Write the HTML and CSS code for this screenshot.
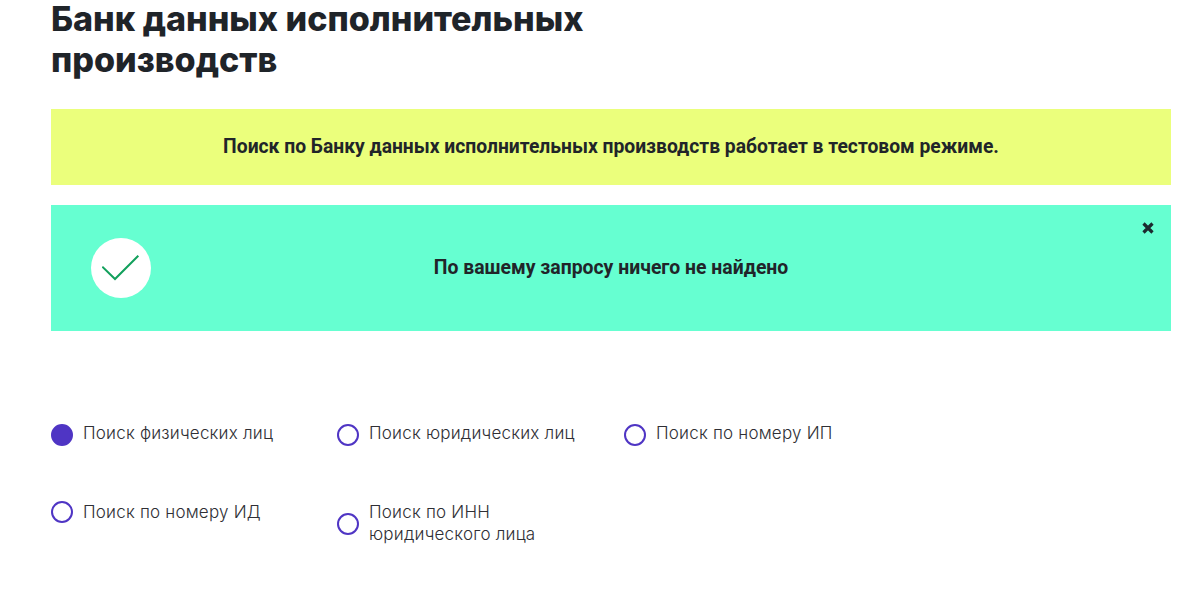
FILE: index.html
```html
<!DOCTYPE html>
<html lang="ru">
<head>
    <meta charset="UTF-8">
    <title>Банк данных исполнительных производств</title>
    <link rel="stylesheet" href="styles.css">
</head>
<body>
    <div class="page">
        <h1 class="page-title">Банк данных исполнительных производств</h1>
        <div class="notice">Поиск по Банку данных исполнительных производств работает в тестовом режиме.</div>
        <div class="result">
            <div class="result-icon">
                <svg width="38" height="26" viewBox="0 0 38 26">
                    <path d="M0.3 11.7 L13 24 L36.3 0.7" fill="none" stroke="#12a05c" stroke-width="2"/>
                </svg>
            </div>
            <div class="result-text">По вашему запросу ничего не найдено</div>
            <svg class="result-close" width="12" height="12" viewBox="0 0 12 12">
                <path d="M1.5 1.5 L10.5 10.5 M10.5 1.5 L1.5 10.5" fill="none" stroke="#1c2b2f" stroke-width="3.2"/>
            </svg>
        </div>
        <div class="search-types">
            <label class="search-type"><span class="radio radio-on"></span><span class="search-label">Поиск физических лиц</span></label>
            <label class="search-type"><span class="radio"></span><span class="search-label">Поиск юридических лиц</span></label>
            <label class="search-type"><span class="radio"></span><span class="search-label">Поиск по номеру ИП</span></label>
            <label class="search-type search-type-flush"><span class="radio"></span><span class="search-label">Поиск по номеру ИД</span></label>
            <label class="search-type search-type-tall"><span class="radio"></span><span class="search-label">Поиск по ИНН<br>юридического лица</span></label>
        </div>
    </div>
</body>
</html>
```

FILE: styles.css
```css
body {
    margin: 0;
    background: #fff;
    color: #212529;
    font-family: "Inter", "Noto Sans", sans-serif;
    overflow: hidden;
}

.page {
    padding: 0 28px 0 51px;
}

.page-title {
    width: 580px;
    height: 111px;
    margin: -2px 0 0;
    font-size: 34.1px;
    line-height: 41px;
    font-weight: 800;
    color: #1f2429;
}

.notice {
    display: flex;
    justify-content: center;
    align-items: center;
    height: 75px;
    padding-bottom: 1px;
    margin-bottom: 20px;
    background: #ebff7c;
    font-family: "Roboto", sans-serif;
    font-size: 19.3px;
    font-weight: 700;
}

.result {
    position: relative;
    display: flex;
    align-items: center;
    height: 126px;
    padding-left: 40px;
    background: #66ffd1;
}

.result-icon {
    display: flex;
    justify-content: center;
    align-items: center;
    width: 60px;
    height: 60px;
    border-radius: 50%;
    background: #fff;
}

.result-text {
    flex: 1;
    padding: 0 100px 1px 0;
    text-align: center;
    font-family: "Roboto", sans-serif;
    font-size: 19.4px;
    font-weight: 700;
}

.result-close {
    position: absolute;
    top: 17px;
    right: 17px;
}

.search-types {
    display: grid;
    grid-template-columns: 286px 287px 287px;
    grid-auto-rows: 79px;
    margin-top: 91px;
}

.search-type {
    display: flex;
    align-items: center;
    align-self: start;
    gap: 10px;
    font-size: 17px;
    line-height: 22px;
    letter-spacing: 0.2px;
    font-weight: 300;
    color: #2f2f35;
}

.search-label {
    margin-bottom: 4px;
}

.search-type-flush .search-label {
    margin-bottom: 0;
}

.search-type-tall .search-label {
    margin-bottom: 2px;
}

.radio {
    flex: none;
    width: 22px;
    height: 22px;
    box-sizing: border-box;
    border: 2px solid #4f35c4;
    border-radius: 50%;
}

.radio-on {
    background: #4f35c4;
}
```
